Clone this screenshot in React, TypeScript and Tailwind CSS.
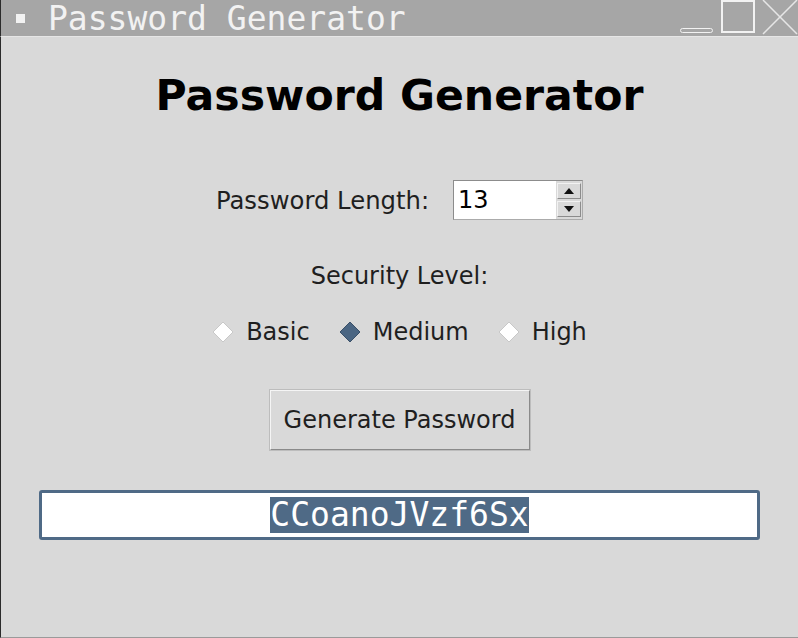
import { useState } from 'react'

const sans = { fontFamily: '"DejaVu Sans", sans-serif' }
const mono = { fontFamily: '"DejaVu Sans Mono", monospace' }

function Diamond({ on }: { on: boolean }) {
  return (
    <svg width="22" height="22" viewBox="0 0 22 22">
      <polygon
        points="11,1 21,11 11,21 1,11"
        fill={on ? '#4a6582' : '#ffffff'}
        stroke={on ? '#3a5068' : '#c8c8c8'}
        strokeWidth="1"
      />
    </svg>
  )
}

export default function App() {
  const [level, setLevel] = useState('Medium')
  const levels = ['Basic', 'Medium', 'High']

  return (
    <div className="flex h-[638px] w-[798px] flex-col overflow-hidden bg-[#d9d9d9]" style={sans}>
      {/* title bar */}
      <div className="flex h-[37px] shrink-0 items-center border-b border-[#e6e6e6] border-l border-l-[#2b2b2b] bg-[#a6a6a6]">
        <div className="ml-[15px] h-[9px] w-[9px] bg-[#f2f2f2]" />
        <span className="ml-[23px] text-[33px] leading-none text-[#f2f2f2]" style={mono}>
          Password Generator
        </span>
        <div className="ml-auto flex h-full items-end">
          <div className="mb-[3px] mr-[8px] h-[5px] w-[33px] rounded-sm border border-[#f2f2f2]" />
          <div className="mb-[3px] mr-[7px] h-[33px] w-[34px] border-2 border-[#f2f2f2]" />
          <svg width="36" height="36" viewBox="0 0 36 36" className="mb-[1px]">
            <path d="M1 1 L35 35 M35 1 L1 35" stroke="#e6e6e6" strokeWidth="1.5" />
          </svg>
        </div>
      </div>

      {/* body */}
      <div className="flex flex-1 flex-col items-center border-b border-b-[#9a9a9a] border-l border-l-[#2b2b2b]">
        <h1 className="mt-[37px] text-[42.6px] font-bold leading-[43px] text-black">Password Generator</h1>

        <div className="mt-[63px] flex items-center text-[24.3px] leading-none text-[#1f1f1f]">
          <span className="mt-[3px]">Password Length:</span>
          <div className="ml-[24px] flex h-[40px] w-[130px] border border-[#ababab] border-t-[#8c8c8c] border-l-[#8c8c8c] bg-white">
            <span className="ml-[4px] flex-1 self-center text-[24px] text-black">13</span>
            <div className="flex w-[26px] flex-col bg-[#d9d9d9] py-[1px]">
              <div className="m-[1px] flex flex-1 items-center justify-center border border-[#f2f2f2] border-r-[#8c8c8c] border-b-[#8c8c8c]">
                <svg width="10" height="6" viewBox="0 0 10 6"><polygon points="5,0 10,6 0,6" fill="#111" /></svg>
              </div>
              <div className="m-[1px] flex flex-1 items-center justify-center border border-[#f2f2f2] border-r-[#8c8c8c] border-b-[#8c8c8c]">
                <svg width="10" height="6" viewBox="0 0 10 6"><polygon points="0,0 10,0 5,6" fill="#111" /></svg>
              </div>
            </div>
          </div>
        </div>

        <div className="mt-[44px] text-[24px] leading-none text-[#1f1f1f]">Security Level:</div>

        <div className="mt-[32px] flex h-[24px] items-center text-[24px] leading-none text-[#1f1f1f]">
          {levels.map((l, i) => (
            <button
              key={l}
              onClick={() => setLevel(l)}
              className={`flex items-center gap-[12px] ${i > 0 ? 'ml-[29px]' : ''}`}
            >
              <Diamond on={level === l} />
              <span>{l}</span>
            </button>
          ))}
        </div>

        <button className="mt-[46px] flex h-[60px] w-[260px] items-center justify-center border border-[#f5f5f5] border-r-[#8a8a8a] border-b-[#8a8a8a] bg-[#d9d9d9] text-[24px] leading-none text-[#1f1f1f] outline outline-1 outline-[#bdbdbd]">
          Generate Password
        </button>

        <div className="mt-[40px] flex h-[50px] w-[721px] items-center justify-center rounded-[3px] border-[3px] border-[#4f6a86] bg-white">
          <span className="bg-[#4f6a86] text-[33px] leading-[36px] text-white" style={mono}>
            CCoanoJVzf6Sx
          </span>
        </div>
      </div>
    </div>
  )
}
